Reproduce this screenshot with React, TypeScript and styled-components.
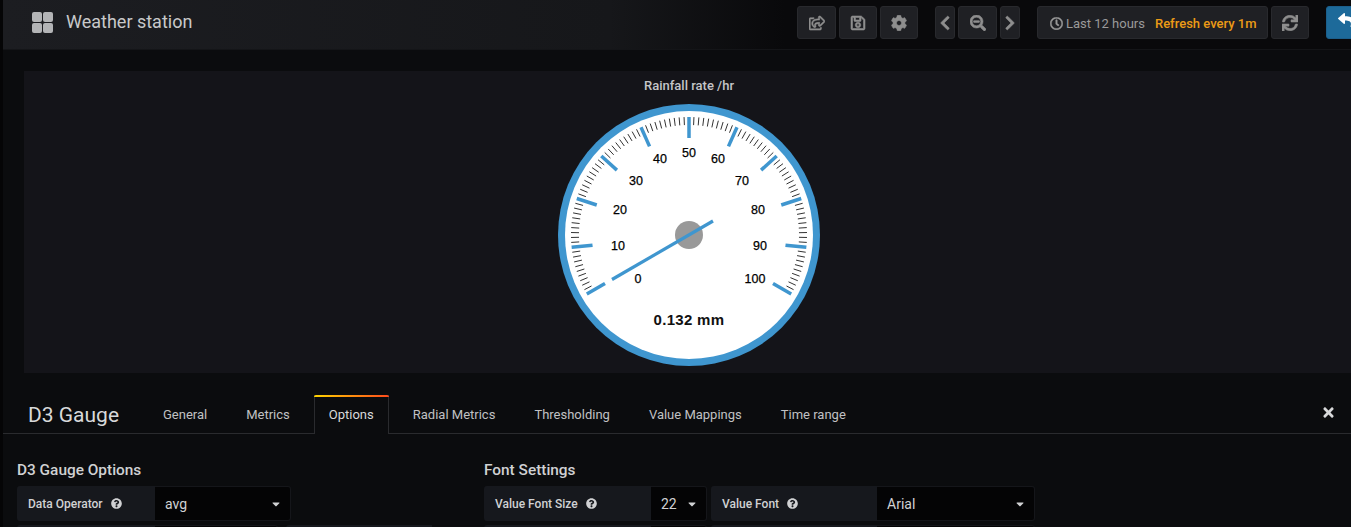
import React from "react";
import styled, { createGlobalStyle } from "styled-components";
import {
  FaRegShareSquare,
  FaRegSave,
  FaCog,
  FaChevronLeft,
  FaChevronRight,
  FaSearchMinus,
  FaRegClock,
  FaSync,
  FaReply,
  FaQuestionCircle,
  FaTimes,
  FaCaretDown,
} from "react-icons/fa";

const Global = createGlobalStyle`
  html, body { margin: 0; padding: 0; background: #0b0c0e; overflow: hidden; }
  body { font-family: Roboto, "Liberation Sans", sans-serif; }
  * { box-sizing: border-box; }
`;

const Page = styled.div`
  width: 1351px;
  height: 527px;
  overflow: hidden;
  background: #0b0c0e;
  display: flex;
  flex-direction: column;
  border-left: 3px solid #050506;
`;

const TopBar = styled.header`
  height: 50px;
  flex: none;
  display: flex;
  align-items: center;
  background: linear-gradient(90deg, #1c1d21 0%, #16171a 45%, #09090b 58%, #09090b 100%);
  border-bottom: 1px solid #141518;
  padding: 0 0 4px 29px;
`;

const GridIcon = styled.div`
  width: 21px;
  height: 21px;
  display: grid;
  grid-template-columns: 1fr 1fr;
  gap: 1px;
  margin-right: 13px;
  i {
    background: #b3b4b6;
    border-radius: 2px;
  }
`;

const DashTitle = styled.h1`
  margin: 0;
  padding-bottom: 2px;
  font-size: 18px;
  font-weight: 400;
  color: #c8c9ca;
  flex: 1;
`;

const Tool = styled.button<{ $w: number; $gap?: number }>`
  width: ${(p) => p.$w}px;
  height: 33px;
  flex: none;
  margin-right: ${(p) => p.$gap ?? 3}px;
  padding: 0;
  display: flex;
  align-items: center;
  justify-content: center;
  background: #1f2024;
  border: 1px solid #28292d;
  border-radius: 3px;
  color: #8e8e8e;
  font-size: 16px;
  svg {
    stroke: currentColor;
    stroke-width: 18px;
  }
`;

const RefreshTool = styled(Tool)`
  padding-top: 1px;
`;

const TimeBtn = styled(Tool)`
  justify-content: flex-start;
  padding: 2px 0 0 12px;
  font-family: Roboto, "Liberation Sans", sans-serif;
  font-size: 13px;
  color: #9a9a9a;
  svg { font-size: 13px; margin-right: 3px; }
  b {
    font-weight: 500;
    color: #eb9b16;
    margin-left: 10px;
  }
`;

const BackBtn = styled.button`
  width: 40px;
  height: 33px;
  flex: none;
  margin-right: -15px;
  padding: 0 0 5px 11px;
  display: flex;
  align-items: center;
  background: #1d6a9a;
  border: 1px solid #1b5f8c;
  border-radius: 3px 0 0 3px;
  color: #fff;
  font-size: 16px;
`;

const Main = styled.div`
  flex: none;
  height: 344px;
  padding: 21px 0 0 21px;
`;

const Panel = styled.section`
  width: 1330px;
  height: 302px;
  background: #141419;
  display: flex;
  flex-direction: column;
  align-items: center;
  padding-top: 6px;
`;

const PanelTitle = styled.div`
  font-size: 13px;
  font-weight: 500;
  color: #c4c5c8;
  line-height: 17px;
  margin-bottom: 6px;
`;

const GaugeSvg = styled.svg`
  display: block;
  width: 280px;
  height: 270px;
`;

const Editor = styled.div`
  flex: 1;
  min-height: 0;
  display: flex;
  flex-direction: column;
`;

const TabBar = styled.nav`
  height: 40px;
  flex: none;
  display: flex;
  align-items: flex-end;
  border-bottom: 1px solid #2a2b2e;
  padding-left: 25px;
`;

const EditorTitle = styled.h2`
  margin: 0 29px 0 0;
  width: 91px;
  font-size: 21px;
  line-height: 36px;
  font-weight: 400;
  color: #d8d9da;
  white-space: nowrap;
`;

const Tab = styled.div<{ $active?: boolean }>`
  position: relative;
  height: 39px;
  margin-bottom: -1px;
  margin-right: 9px;
  padding: 0 14px 2px;
  display: flex;
  align-items: center;
  font-size: 13px;
  font-weight: 400;
  color: ${(p) => (p.$active ? "#d8d9da" : "#c0c1c3")};
  border: 1px solid transparent;
  border-bottom: none;
  ${(p) =>
    p.$active &&
    `
    background: #0b0c0e;
    border-color: #2a2b2e;
    &::before {
      content: "";
      position: absolute;
      left: -1px;
      right: -1px;
      top: -1px;
      height: 2px;
      background: linear-gradient(90deg, #ffd500, #ff4a1c);
      border-radius: 2px 2px 0 0;
    }
  `}
`;

const CloseBtn = styled.span`
  margin-left: auto;
  margin-right: 15px;
  margin-bottom: 13px;
  color: #d8d9da;
  font-size: 15px;
  display: flex;
`;

const Sections = styled.div`
  display: flex;
  padding: 27px 0 0 14px;
`;

const Section = styled.section<{ $w: number }>`
  width: ${(p) => p.$w}px;
  flex: none;
`;

const SectionTitle = styled.h5`
  margin: 0 0 6px;
  font-size: 15.4px;
  line-height: 19px;
  font-weight: 500;
  color: #d0d1d3;
`;

const Row = styled.div`
  display: flex;
  height: 35px;
  margin-bottom: 4px;
`;

const FieldLabel = styled.label<{ $w: number }>`
  width: ${(p) => p.$w}px;
  flex: none;
  display: flex;
  align-items: center;
  padding-left: 11px;
  background: #16181d;
  border-radius: 3px 0 0 3px;
  font-size: 12px;
  font-weight: 500;
  color: #d0d1d3;
  svg { margin-left: 8px; font-size: 11px; }
`;

const Select = styled.div<{ $w: number; $gap?: number }>`
  width: ${(p) => p.$w}px;
  flex: none;
  margin-right: ${(p) => p.$gap ?? 0}px;
  display: flex;
  align-items: center;
  justify-content: space-between;
  padding: 0 8px 0 10px;
  background: #040405;
  border: 1px solid #15161a;
  border-left: none;
  border-radius: 0 3px 3px 0;
  font-size: 14px;
  color: #d0d1d3;
  svg { font-size: 12px; flex: none; }
`;

const TICK = "#3f96cf";

const polar = (deg: number, r: number) => {
  const a = ((deg - 90) * Math.PI) / 180;
  return [Math.cos(a) * r, Math.sin(a) * r];
};

const labels: [string, number, number][] = [
  ["0", -51, 44],
  ["10", -71, 11],
  ["20", -69, -25],
  ["30", -53, -54],
  ["40", -29, -76],
  ["50", 0, -82],
  ["60", 29, -76],
  ["70", 53, -54],
  ["80", 69, -25],
  ["90", 71, 11],
  ["100", 66, 44],
];

const Gauge = () => {
  const ticks = [];
  for (let i = 0; i <= 100; i++) {
    const deg = -120 + i * 2.4;
    const major = i % 10 === 0;
    const [x1, y1] = polar(deg, 118);
    const [x2, y2] = polar(deg, major ? 97 : 110);
    ticks.push(
      <line
        key={i}
        x1={x1}
        y1={y1}
        x2={x2}
        y2={y2}
        stroke={major ? TICK : "#333"}
        strokeWidth={major ? 3.5 : 1}
      />
    );
  }
  return (
    <GaugeSvg viewBox="-140 -135 280 270">
      <circle r="131" fill={TICK} />
      <circle r="124" fill="#fff" />
      {ticks}
      {labels.map(([t, x, y]) => (
        <text
          key={t}
          x={x}
          y={y + 4}
          textAnchor="middle"
          fontFamily="'Liberation Sans', Arial, sans-serif"
          fontSize="12.5"
          stroke="#000"
          strokeWidth="0.25"
          fill="#000"
        >
          {t}
        </text>
      ))}
      <circle r="14" fill="#999" />
      <line x1="-77" y1="44.5" x2="24" y2="-14" stroke={TICK} strokeWidth="3.2" />
      <text
        x="0"
        y="90"
        textAnchor="middle"
        fontFamily="'Liberation Sans', Arial, sans-serif"
        fontSize="15"
        fontWeight="700"
        letterSpacing="0.3"
        fill="#111"
      >
        0.132 mm
      </text>
    </GaugeSvg>
  );
};

const Help = () => <FaQuestionCircle />;

export default function App() {
  return (
    <Page>
      <Global />
      <TopBar>
        <GridIcon>
          <i />
          <i />
          <i />
          <i />
        </GridIcon>
        <DashTitle>Weather station</DashTitle>
        <Tool $w={39}><FaRegShareSquare /></Tool>
        <Tool $w={38}><FaRegSave /></Tool>
        <Tool $w={38} $gap={17}><FaCog /></Tool>
        <Tool $w={20}><FaChevronLeft /></Tool>
        <Tool $w={39}><FaSearchMinus /></Tool>
        <Tool $w={20} $gap={17}><FaChevronRight /></Tool>
        <TimeBtn $w={231}>
          <FaRegClock />
          Last 12 hours
          <b>Refresh every 1m</b>
        </TimeBtn>
        <RefreshTool $w={38} $gap={17}><FaSync /></RefreshTool>
        <BackBtn><FaReply /></BackBtn>
      </TopBar>
      <Main>
        <Panel>
          <PanelTitle>Rainfall rate /hr</PanelTitle>
          <Gauge />
        </Panel>
      </Main>
      <Editor>
        <TabBar>
          <EditorTitle>D3 Gauge</EditorTitle>
          <Tab>General</Tab>
          <Tab>Metrics</Tab>
          <Tab $active>Options</Tab>
          <Tab>Radial Metrics</Tab>
          <Tab>Thresholding</Tab>
          <Tab>Value Mappings</Tab>
          <Tab>Time range</Tab>
          <CloseBtn><FaTimes /></CloseBtn>
        </TabBar>
        <Sections>
          <Section $w={467}>
            <SectionTitle>D3 Gauge Options</SectionTitle>
            <Row>
              <FieldLabel $w={138}>Data Operator<Help /></FieldLabel>
              <Select $w={136}>avg<FaCaretDown /></Select>
            </Row>
            <Row>
              <FieldLabel $w={138} />
              <Select $w={123} $gap={8} />
              <FieldLabel $w={146} />
            </Row>
          </Section>
          <Section $w={560}>
            <SectionTitle>Font Settings</SectionTitle>
            <Row>
              <FieldLabel $w={167}>Value Font Size<Help /></FieldLabel>
              <Select $w={56} $gap={4}>22<FaCaretDown /></Select>
              <FieldLabel $w={166}>Value Font<Help /></FieldLabel>
              <Select $w={158}>Arial<FaCaretDown /></Select>
            </Row>
            <Row>
              <FieldLabel $w={167} />
              <Select $w={56} $gap={4} />
              <FieldLabel $w={166} />
              <Select $w={158} />
            </Row>
          </Section>
        </Sections>
      </Editor>
    </Page>
  );
}
